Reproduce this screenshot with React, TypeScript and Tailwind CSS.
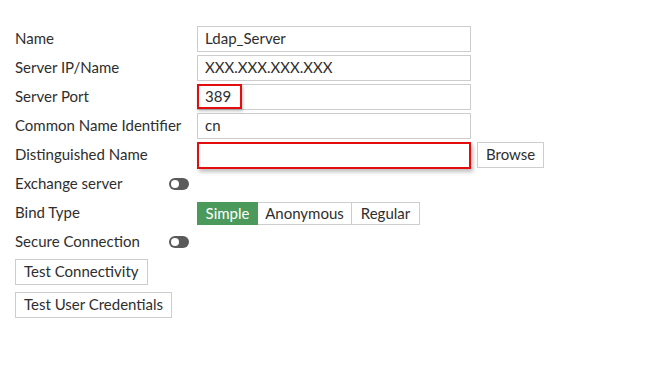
import React from "react";

function Toggle() {
  return (
    <span className="relative inline-block w-[20px] h-[12px] rounded-full bg-[#5a5a5a] shrink-0">
      <span className="absolute left-[2px] top-[2px] w-[8px] h-[8px] rounded-full bg-white" />
    </span>
  );
}

function Row({ label, children }: { label: string; children?: React.ReactNode }) {
  return (
    <div className="flex items-center h-[26px]">
      <div className="w-[182px] shrink-0 pb-[2px]">{label}</div>
      {children}
    </div>
  );
}

function TextBox({ value }: { value?: string }) {
  return (
    <div className="w-[274px] h-[26px] border border-[#cdcdcd] bg-white px-[7px] pb-[2px] flex items-center">
      {value}
    </div>
  );
}

export default function App() {
  return (
    <main
      className="w-[648px] h-[389px] bg-white text-[#2e2e2e] text-[15px] leading-[18px] pl-[15px] pt-[26px]"
      style={{ fontFamily: "Lato, 'Liberation Sans', sans-serif" }}
    >
      <div className="flex flex-col gap-[3px]">
        <Row label="Name">
          <TextBox value="Ldap_Server" />
        </Row>
        <Row label="Server IP/Name">
          <TextBox value="XXX.XXX.XXX.XXX" />
        </Row>
        <Row label="Server Port">
          <div className="relative">
            <TextBox value="389" />
            {/* highlight */}
            <div className="absolute left-0 top-0 w-[45px] h-[25px] border-2 border-[#e30d0d] shadow-[1px_2px_3px_rgba(0,0,0,0.25)]" />
          </div>
        </Row>
        <Row label="Common Name Identifier">
          <TextBox value="cn" />
        </Row>
        <Row label="Distinguished Name">
          <div className="w-[274px] h-[27px] border-2 border-[#e30d0d] bg-white shadow-[2px_3px_4px_rgba(0,0,0,0.25)]" />
          <button className="ml-[6px] h-[26px] px-[8px] pb-[2px] border border-[#cdcdcd] bg-white">Browse</button>
        </Row>
        <div className="flex items-center h-[26px]">
          <div className="w-[154px] shrink-0 pb-[2px]">Exchange server</div>
          <Toggle />
        </div>
        <Row label="Bind Type">
          <div className="flex h-[23px] mt-[1px]">
            <button className="w-[61px] pb-[2px] border border-[#4b9a5c] bg-[#4b9a5c] text-white">Simple</button>
            <button className="w-[94px] pb-[2px] border border-l-0 border-[#cdcdcd] bg-white">Anonymous</button>
            <button className="w-[68px] pb-[2px] border border-l-0 border-[#cdcdcd] bg-white">Regular</button>
          </div>
        </Row>
        <div className="flex items-center h-[26px]">
          <div className="w-[154px] shrink-0 pb-[2px]">Secure Connection</div>
          <Toggle />
        </div>
        <div className="mt-[1px]">
          <button className="h-[26px] px-[8px] pb-[2px] border border-[#cdcdcd] bg-white">Test Connectivity</button>
        </div>
        <div className="mt-[4px]">
          <button className="h-[26px] px-[8px] pb-[2px] border border-[#cdcdcd] bg-white">Test User Credentials</button>
        </div>
      </div>
    </main>
  );
}
